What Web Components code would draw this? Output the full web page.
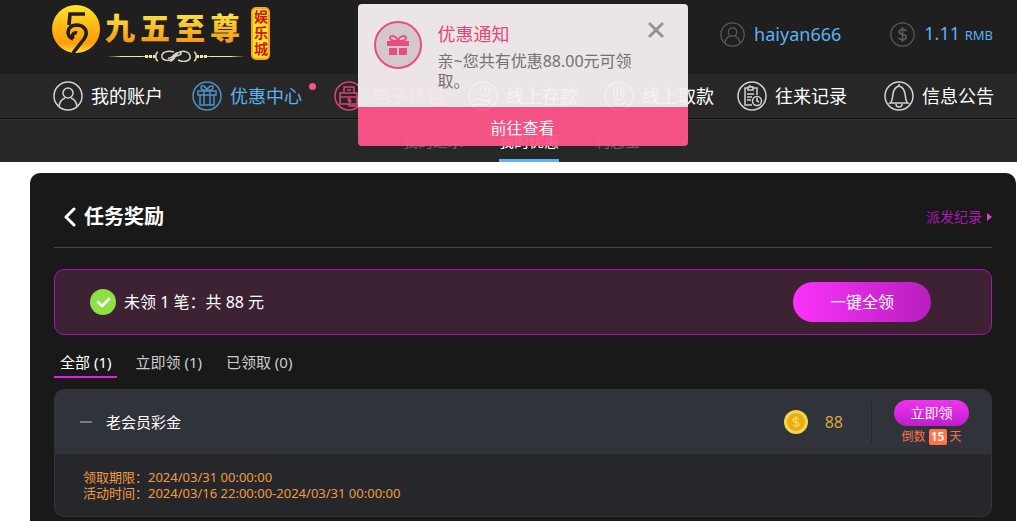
<!DOCTYPE html>
<html lang="zh-CN">
<head>
<meta charset="utf-8">
<meta name="viewport" content="width=device-width, initial-scale=1">
<title>任务奖励</title>
<style>
body{margin:0;background:#fff;font-family:"Noto Sans","Noto Sans CJK SC",sans-serif;color:#fff}
</style>
</head>
<body>
<member-page></member-page>
<script>
const define = (name, html) => customElements.define(name, class extends HTMLElement {
  constructor() {
    super();
    const t = document.createElement('template');
    t.innerHTML = html;
    this.attachShadow({ mode: 'open' }).append(t.content.cloneNode(true));
  }
});

const glyphs = {
  user: '<circle cx="15" cy="12" r="5"/><path d="M6 25c1-5 3-7 6-8M24 25c-1-5-3-7-6-8"/>',
  gift: '<path d="M6 10h18v4H6zM8 14h14v10H8zM12 10v14M18 10v14M15 9C13 4 9 4 9 6.500c0 2 3 3 6 3 3 0 6-1 6-3C21 4 17 4 15 9"/>',
  wallet: '<path d="M6 12h17v11H6zM6 16h17M10 12V6h10v6M15 23v2h9v-9M13 9h4"/><path d="M16.500 18h-2v1.500h2V21h-2"/>',
  deposit: '<path d="M6 19c4-3 6-1 9 1h4l4-3M7 24l5-1 6 1 6-5"/><circle cx="17" cy="10" r="5"/><path d="M17 7v6"/>',
  withdraw: '<path d="M10 5v9a5 5 0 0 0 10 0V5M13 6v9M17 6v9M9 20l6 4 7-3"/>',
  record: '<path d="M15 24H8V7h3M16 7h4v7M11 6h5v3h-5zM13 6V4M10 13h7M10 16h5M10 19h4"/><circle cx="20" cy="20" r="4.500"/><path d="M20 17v3l2 1"/>',
  bell: '<path d="M6 22c3-2 2-5 3-9 .6-4 2-7 6-8 4 1 5.400 4 6 8 1 4 0 7 3 9zM12 23c0 4 6 4 6 0M15 5V3"/>',
  money: '<path stroke-width="2" d="M19.500 11c-1-3-8.500-3-8.500 1 0 4 8.500 2 8.500 6 0 4-8 4-9 1M15 6v18"/>'
};

customElements.define('round-icon', class extends HTMLElement {
  connectedCallback() {
    if (this.shadowRoot) return;
    this.attachShadow({ mode: 'open' }).innerHTML = `
      <style>:host{display:block;flex:none;width:30px;height:30px}svg{display:block;width:100%;height:100%}</style>
      <svg viewBox="0 0 30 30" fill="none" stroke="currentColor" stroke-width="1.5" aria-hidden="true">
      <circle cx="15" cy="15" r="14"/>${glyphs[this.getAttribute('name')]}</svg>`;
  }
});

define('site-logo', `
<style>:host{display:block}svg{display:block}text{font-family:"Noto Sans CJK SC",sans-serif}</style>
<svg width="222" height="62" viewBox="0 0 222 62" role="img" aria-label="九五至尊娱乐城">
  <defs>
    <linearGradient id="coin" x1="0" y1="0" x2="0" y2="1"><stop offset="0" stop-color="#ffe62c"/><stop offset=".45" stop-color="#ffb615"/><stop offset=".8" stop-color="#ff9d0c"/><stop offset="1" stop-color="#ffe13c"/></linearGradient>
    <linearGradient id="gold" x1="0" y1="0" x2="0" y2="1"><stop offset=".1" stop-color="#fff04a"/><stop offset=".9" stop-color="#f79412"/></linearGradient>
    <linearGradient id="line"><stop offset="0" stop-color="#d9cf8c" stop-opacity="0"/><stop offset=".3" stop-color="#efe7a5"/><stop offset=".7" stop-color="#efe7a5"/><stop offset="1" stop-color="#d9cf8c" stop-opacity="0"/></linearGradient>
  </defs>
  <circle cx="24" cy="29" r="24" fill="url(#coin)"/>
  <path d="M33 14H18l-1 11" fill="none" stroke="#201e1c" stroke-width="3.600"/>
  <path d="M21 39c-7-2-7-13 3-14 9 0 13 7 8 14L21 53M21 39c-2-4 1-7 4-6" fill="none" stroke="#201e1c" stroke-width="3.600"/>
  <text font-size="30" font-weight="900" y="39" x="53 88 123 158" fill="url(#gold)">九五至尊</text>
  <rect x="55" y="56" width="49" height="1" fill="url(#line)"/>
  <rect x="144" y="56" width="49" height="1" fill="url(#line)"/>
  <path d="M93 56.500h11M144 56.500h11" stroke="#efe7a5" stroke-width="3" stroke-dasharray="3 1"/>
  <path d="M106 52c-3 1-3 8 0 9M142 52c3 1 3 8 0 9M122 52c-6-2-13 0-12 5 1 4 8 5 12 0l4-4c4-3 11-2 12 3 1 5-6 7-12 4M116 58c2 1 5-2 7-4s7-2 6 0-5 1-6 3-2 4-5 4" fill="none" stroke="#d8d4c0" stroke-width="1.500"/>
  <rect x="200" y="8" width="17" height="51" rx="4" fill="#ffe02d" stroke="#f5a61a" stroke-width="2"/>
  <text font-size="14" font-weight="700" x="202 202 202" y="22 38 54" fill="#c91712">娱乐城</text>
</svg>`);

define('top-bar', `
<style>
:host{display:block;background:#1f1f1f;height:74px}
.in{display:flex;justify-content:space-between;align-items:start;padding:0 24px 0 52px}
.who{display:flex;gap:49px;padding-top:20px;color:#5cb2f3;font-size:18px;line-height:26px}
.who div{display:flex;gap:9px;align-items:center}
round-icon{width:25px;height:25px;color:#5a5a5a}
small{font-size:13px}
</style>
<div class="in"><site-logo></site-logo>
<div class="who"><div><round-icon name="user"></round-icon><span>haiyan666</span></div>
<div><round-icon name="money"></round-icon><span>1.11 <small>RMB</small></span></div></div></div>`);

define('nav-item', `
<style>
:host{display:flex;color:#fff}
a{display:flex;align-items:center;gap:8px;color:inherit;text-decoration:none;font-size:18px;line-height:26px;white-space:nowrap;position:relative}
::slotted(round-icon){color:var(--icon,#d2d2d2)}
:host([dot]) a::after{content:"";position:absolute;right:-14px;top:2px;width:7px;height:7px;border-radius:50%;background:#fb5284}
</style>
<a href="#"><slot name="icon"></slot><slot></slot></a>`);

define('main-nav', `
<style>
:host{display:block;background:#272727;border-bottom:1px solid #111}
nav{display:grid;grid-template-columns:139fr 142fr 134fr 136fr 133fr 147fr 110fr;padding:7px 23px 7px 53px}
.on{color:#5cb2f3;--icon:#4a91c5}
.hot{color:#fb5284;--icon:#d84571}
</style>
<nav>
<nav-item><round-icon slot="icon" name="user"></round-icon>我的账户</nav-item>
<nav-item class="on" dot><round-icon slot="icon" name="gift"></round-icon>优惠中心</nav-item>
<nav-item class="hot"><round-icon slot="icon" name="wallet"></round-icon>电子钱包</nav-item>
<nav-item><round-icon slot="icon" name="deposit"></round-icon>线上存款</nav-item>
<nav-item><round-icon slot="icon" name="withdraw"></round-icon>线上取款</nav-item>
<nav-item><round-icon slot="icon" name="record"></round-icon>往来记录</nav-item>
<nav-item><round-icon slot="icon" name="bell"></round-icon>信息公告</nav-item>
</nav>`);

define('sub-nav', `
<style>
:host{display:block;background:#272727;border-top:1px solid #333;box-sizing:border-box;height:43px}
nav{display:flex;justify-content:center;gap:36px;height:100%;padding-left:26px}
a{box-sizing:border-box;padding-top:9px;color:#666;text-decoration:none;font-size:15px;line-height:24px;border-bottom:3px solid transparent}
.on{color:#fff;border-color:#5cb2f3}
</style>
<nav><a href="#">我的返水</a><a href="#" class="on">我的优惠</a><a href="#">利息宝</a></nav>`);

define('promo-notice', `
<style>
:host{display:block;position:absolute;top:4px;left:calc(50% - 151px);width:330px;border-radius:4px;overflow:hidden;opacity:.95}
.body{display:grid;grid-template-columns:48px 1fr 16px;column-gap:16px;padding:17px 24px 16px 16px;background:#f6f0f2}
h2{margin:0;font-size:18px;line-height:26px;font-weight:400;color:#f0487f}
p{margin:4px -8px 0 0;font-size:16px;line-height:20px;color:#777}
.close{border:0;padding:0;background:none;width:16px;height:18px;color:#999}
.go{display:block;width:100%;height:39px;border:0;background:#ff558b;padding:2px 0 0;color:#fff;font:16px/24px "Noto Sans","Noto Sans CJK SC",sans-serif}
svg{display:block}
</style>
<div class="body">
<svg width="48" height="48" viewBox="0 0 48 48" aria-hidden="true"><circle cx="24" cy="24" r="23" fill="#ddd2d6" stroke="#f45086" stroke-width="2"/><path d="M13 20h22v5H13zM15 27h8v7h-8zM25 27h8v7h-8z" fill="#f45086"/><path d="M24 20c-2-6-8-6-8-3 0 2 3 3 8 3 5 0 8-1 8-3 0-3-6-3-8 3" fill="none" stroke="#f45086" stroke-width="2"/></svg>
<div><h2>优惠通知</h2><p>亲~您共有优惠88.00元可领取。</p></div>
<button class="close" aria-label="关闭"><svg width="16" height="18" viewBox="0 0 16 18"><path d="M1 2l14 14M15 2L1 16" stroke="currentColor" stroke-width="3"/></svg></button>
</div>
<button class="go">前往查看</button>`);

define('claim-banner', `
<style>
:host{display:flex;align-items:center;gap:8px;box-sizing:border-box;height:66px;padding:0 60px 0 35px;border:1px solid #a912b4;border-radius:10px;background:#3d2233;font-size:16px;line-height:24px}
svg{flex:none}
span{flex:1}
button{width:138px;height:40px;border:0;border-radius:20px;background:linear-gradient(90deg,#fb32fb,#b71fbf);color:#fff;font:16px/24px "Noto Sans","Noto Sans CJK SC",sans-serif}
</style>
<svg width="26" height="26" viewBox="0 0 26 26" aria-hidden="true"><circle cx="13" cy="13" r="13" fill="#8fe044"/><path d="M8 13l4 4 7-7" fill="none" stroke="#fff" stroke-width="2.600" stroke-linecap="round" stroke-linejoin="round"/></svg>
<span><slot></slot></span><button>一键全领</button>`);

define('status-tabs', `
<style>
:host{display:flex;gap:12px;font-size:15px;line-height:24px}
button{border:0;border-bottom:2px solid transparent;background:none;padding:0 6px 2px;color:#ccc;font:inherit}
.on{color:#fff;border-color:#e81be8}
</style>
<button class="on">全部 (1)</button><button>立即领 (1)</button><button>已领取 (0)</button>`);

define('reward-card', `
<style>
:host{display:block;border-radius:10px;background:#26272b;border:1px solid #32343c;overflow:hidden}
.head{display:flex;align-items:center;height:64px;background:#31333b;font-size:15px;line-height:24px}
.fold{flex:none;width:12px;height:2px;padding:0;border:0;margin:0 14px 0 25px;background:#777a80}
.name{flex:1}
.sum{display:flex;align-items:center;gap:17px;color:#d8a63c;font-size:16px;margin-right:28px}
.act{width:120px;height:43px;box-sizing:border-box;border-left:1px solid #25272d;display:flex;flex-direction:column;align-items:center}
.get{flex:none;width:75px;height:26px;margin-top:-1px;border:0;border-radius:13px;padding:0;background:linear-gradient(#f231f2,#bd1fca);color:#fff;font:14px/24px "Noto Sans","Noto Sans CJK SC",sans-serif}
.left{display:flex;align-items:center;gap:3px;margin-top:3px;color:#f4714e;font-size:12px;line-height:16px}
b{background:#ff7449;color:#fff;border-radius:2px;width:18px;text-align:center;font-weight:600}
.info{padding:15px 28px 15px;color:#f29a3e;font-size:13px;line-height:16px}
</style>
<div class="head"><button class="fold" aria-label="收起"></button><span class="name">老会员彩金</span>
<div class="sum"><svg width="24" height="24" viewBox="0 0 24 24" aria-hidden="true"><circle cx="12" cy="12" r="12" fill="#f7d552"/><circle cx="12" cy="12" r="9" fill="#e8ae16"/><path d="M15 9.500c-1-2-6-2-6 .4 0 2.500 6 1.500 6 4.200 0 2.400-5 2.400-6 .4M12 6v12" fill="none" stroke="#f9d95c" stroke-width="1.300"/></svg><span>88</span></div>
<div class="act"><button class="get">立即领</button><div class="left"><span>倒数</span><b>15</b><span>天</span></div></div></div>
<div class="info"><div>领取期限：2024/03/31 00:00:00</div><div>活动时间：2024/03/16 22:00:00-2024/03/31 00:00:00</div></div>`);

define('reward-panel', `
<style>
:host{display:block;background:#191919;border-radius:10px 10px 0 0;padding:0 24px 3px}
header{display:flex;align-items:center;gap:8px;padding:28px 0 14px;border-bottom:1px solid #444}
.back{border:0;background:none;padding:0;margin-left:9px;color:#fff}
svg{display:block}
h1{margin:0;flex:1;font-size:20px;line-height:32px;font-weight:700}
header a{display:flex;align-items:center;gap:4px;color:#a818b4;text-decoration:none;font-size:14px;line-height:20px}
claim-banner{margin-top:21px}
status-tabs{margin-top:15px}
reward-card{margin-top:11px}
</style>
<header><button class="back" aria-label="返回"><svg width="13" height="20" viewBox="0 0 13 20"><path d="M11 2L3 10l8 8" fill="none" stroke="currentColor" stroke-width="3" stroke-linecap="round" stroke-linejoin="round"/></svg></button><h1>任务奖励</h1>
<a href="#">派发纪录<svg width="6" height="8" viewBox="0 0 6 8"><path d="M1 0l5 4-5 4z" fill="#dc3ce8"/></svg></a></header>
<claim-banner>未领 1 笔：共 88 元</claim-banner>
<status-tabs></status-tabs>
<reward-card></reward-card>`);

define('member-page', `
<style>
:host{display:flex;flex-direction:column;min-height:100vh;position:relative}
reward-panel{flex:1;margin:11px 1px 0 30px}
</style>
<top-bar></top-bar><main-nav></main-nav><sub-nav></sub-nav>
<reward-panel></reward-panel>
<promo-notice></promo-notice>`);
</script>
</body>
</html>
